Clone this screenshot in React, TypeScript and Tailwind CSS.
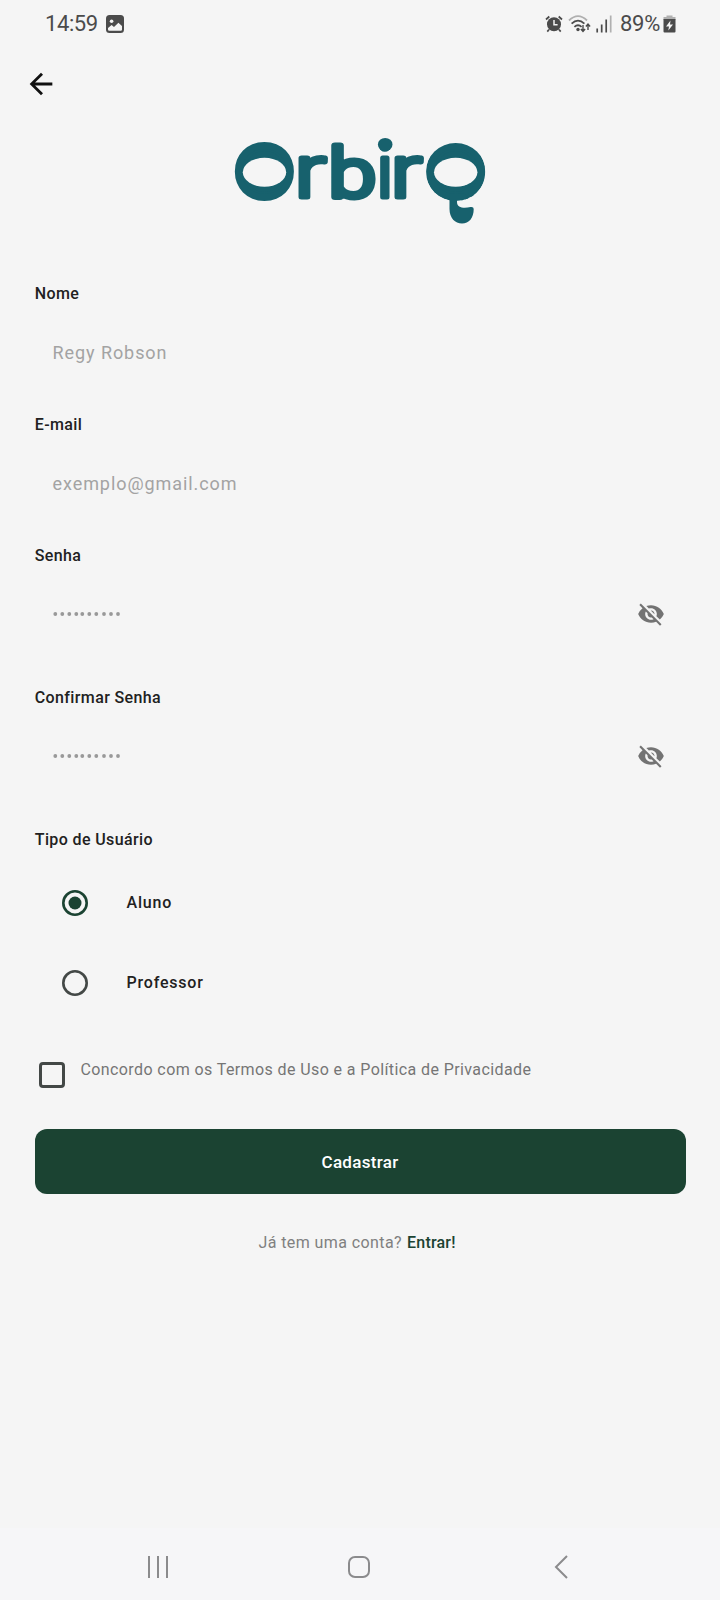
import { MdArrowBack, MdVisibilityOff } from "react-icons/md";

function StatusBar() {
  return (
    <header className="flex h-12 items-center pl-[45px] pr-[44px] text-[#4b4b4b]">
      <span className="text-[22px] leading-6 tracking-[-0.4px]">14:59</span>
      <svg className="ml-[8px] h-[18px] w-[18px]" viewBox="0 0 18 18">
        <rect width="18" height="18" rx="3.5" fill="currentColor" />
        <circle cx="5.6" cy="6.2" r="1.8" fill="#f4f4f4" />
        <path d="M2 14.6V13l3.6-3 2.4 2 4.4-4.2L16 11v3.6q0 1.2-1.2 1.2H3.2Q2 15.800 2 14.600z" fill="#f4f4f4" />
      </svg>
      <div className="ml-auto flex items-center">
        <svg className="h-[18px] w-[18px]" viewBox="0 0 18 18">
          <circle cx="9" cy="9.300" r="7" fill="currentColor" />
          <path d="M1 4.500 4.300 1.500M17 4.500 13.700 1.500M4 14.500 2.300 16.600M14 14.500l1.700 2.100" stroke="currentColor" strokeWidth="1.700" fill="none" />
          <path d="M9 5v4.700h3.600" stroke="#f4f4f4" strokeWidth="1.500" fill="none" />
        </svg>
        <svg className="ml-[5px] h-[20px] w-[24px]" viewBox="0 0 24 20">
          <path d="M1 6.500Q10-2.200 19 6.500" stroke="#b0b0b0" strokeWidth="1.800" fill="none" />
          <path d="M3.600 9.600Q10 3.600 16.400 9.600M6.400 12.800Q10 9.600 13.600 12.800" stroke="currentColor" strokeWidth="1.800" fill="none" />
          <circle cx="10" cy="15.500" r="1.700" fill="currentColor" />
          <path d="M15 11v6M12.900 15l2.100 2.500 2.100-2.500M20 16v-6M17.900 12.500l2.100-2.500 2.100 2.500" stroke="currentColor" strokeWidth="1.400" fill="none" />
        </svg>
        <svg className="ml-[4px] h-[18px] w-[16px]" viewBox="0 0 16 18">
          <path d="M1.200 17.500v-4M5.700 17.500v-8M10.200 17.500v-13" stroke="currentColor" strokeWidth="1.700" />
          <path d="M14.700 17.500v-17" stroke="#b0b0b0" strokeWidth="1.700" />
        </svg>
        <span className="ml-[8px] text-[22px] leading-6 tracking-[-0.3px]">89%</span>
        <svg className="ml-[3px] h-[18px] w-[13px]" viewBox="0 0 13 18">
          <path d="M3.500 2V.500h6V2h3v3h-12V2z" fill="#b0b0b0" />
          <path d="M.500 4h12v12.500q0 1-1 1h-10q-1 0-1-1z" fill="currentColor" />
          <path d="M7.500 5.500 3 11.500h3L5.300 15.500l4.700-6H7z" fill="#f4f4f4" />
        </svg>
      </div>
    </header>
  );
}

function Logo() {
  return (
    <svg className="h-[90px] w-[260px] overflow-visible" viewBox="0 0 260 90" fill="#17616d" stroke="#17616d" strokeLinejoin="round" role="img" aria-label="OrbirQ">
      <defs>
        <clipPath id="bowl">
          <ellipse cx="225.700" cy="38" rx="30" ry="29" />
        </clipPath>
      </defs>
      <text x="34.500" y="63" textAnchor="middle" fontFamily="Lato, sans-serif" fontWeight="900" fontSize="70" strokeWidth="7">O</text>
      <ellipse cx="34.500" cy="38.300" rx="21.700" ry="14.500" fill="#f5f5f5" stroke="none" />
      <g fontFamily="Roboto, sans-serif" fontWeight="300" fontSize="74" strokeWidth="5">
        <text transform="translate(64.500 62.500) scale(1.270 1)">r</text>
        <text transform="translate(98.500 62.500) scale(1.250 1)" fontSize="69" strokeWidth="6">b</text>
        <text transform="translate(146.500 62.500)">i</text>
        <text transform="translate(160.500 62.500) scale(1.270 1)">r</text>
      </g>
      <ellipse cx="155.200" cy="10.500" rx="7.300" ry="6.600" stroke="none" />
      <g clipPath="url(#bowl)">
        <text x="225.700" y="63" textAnchor="middle" fontFamily="Lato, sans-serif" fontWeight="900" fontSize="70" strokeWidth="7">Q</text>
      </g>
      <ellipse cx="225.700" cy="38.300" rx="21.700" ry="14.500" fill="#f5f5f5" stroke="none" />
      <path d="M219.500 63V75C219.500 84 225 89.500 232 89.500C239 89.500 243.700 84 243.700 75Q243.700 72.500 240.500 73C234 74.500 227 74 227 68V63z" stroke="none" />
    </svg>
  );
}

function Label({ children }: { children: string }) {
  return <label className="block h-6 pl-[0.3px] text-[16px] font-medium leading-6 tracking-[0.37px] text-[#212121]">{children}</label>;
}

function Field({ label, value }: { label: string; value: string }) {
  return (
    <div className="mb-[29px]">
      <Label>{label}</Label>
      <div className="mt-[15px] mb-px flex h-[62px] items-center pl-[18px] text-[18px] tracking-[0.93px] text-[#a3a3a3]">{value}</div>
    </div>
  );
}

const dots = [2.3, 9.3, 16.3, 23.3, 29.3, 36.3, 43.3, 51, 58, 65];

function PasswordField({ label }: { label: string }) {
  return (
    <div className="mb-[40px]">
      <Label>{label}</Label>
      <div className="mt-[15px] mb-px flex h-[62px] items-center justify-between pl-[18px] pr-[21px]">
        <svg className="mt-[2px] h-[6px] w-[68px]" viewBox="0 0 68 6" fill="#999999">
          {dots.map((x) => (
            <circle key={x} cx={x} cy="2" r="1.900" />
          ))}
        </svg>
        <MdVisibilityOff className="h-[28px] w-[28px] text-[#737373]" />
      </div>
    </div>
  );
}

function Radio({ label, checked }: { label: string; checked?: boolean }) {
  return (
    <div className="flex h-20 items-center pl-[27px]">
      <svg className={checked ? "h-[26px] w-[26px] text-[#1b4332]" : "h-[26px] w-[26px] text-[#434846]"} viewBox="0 0 26 26">
        <circle cx="13" cy="13" r="11.700" fill="none" stroke="currentColor" strokeWidth="2.600" />
        {checked && <circle cx="13" cy="13" r="6.500" fill="currentColor" />}
      </svg>
      <span className="ml-[39px] text-[16px] font-medium leading-6 tracking-[0.8px] text-[#212121]">{label}</span>
    </div>
  );
}

function NavBar() {
  return (
    <nav className="mt-auto flex h-[72px] items-center bg-[#f6f6f8] pl-[147px] pt-[6px]">
      <svg className="h-6 w-6" viewBox="0 0 24 24" stroke="#8b8b8d" strokeWidth="2">
        <path d="M2 1v22M11 1v22M20 1v22" />
      </svg>
      <svg className="ml-[176px] h-6 w-6" viewBox="0 0 24 24" stroke="#8b8b8d" strokeWidth="2" fill="none">
        <rect x="2" y="2" width="20" height="20" rx="6" />
      </svg>
      <svg className="ml-[183px] h-6 w-[14px]" viewBox="0 0 14 24" stroke="#8b8b8d" strokeWidth="2" fill="none">
        <path d="M13 1 2 12l11 11" />
      </svg>
    </nav>
  );
}

export default function App() {
  return (
    <div className="flex h-[1600px] w-[720px] flex-col overflow-hidden bg-[#f5f5f5] font-['Roboto',sans-serif]">
      <StatusBar />
      <div className="flex h-[71px] items-center pl-[23.500px]">
        <MdArrowBack className="h-[34px] w-[34px] text-[#111111]" />
      </div>
      <div className="mt-[15px] flex h-[90px] justify-center">
        <Logo />
      </div>
      <main className="mt-[58px] flex flex-col px-[34.500px]">
        <Field label="Nome" value="Regy Robson" />
        <Field label="E-mail" value="exemplo@gmail.com" />
        <PasswordField label="Senha" />
        <PasswordField label="Confirmar Senha" />
        <Label>Tipo de Usuário</Label>
        <div className="mt-[11px]">
          <Radio label="Aluno" checked />
          <Radio label="Professor" />
        </div>
        <div className="mt-[35px] flex items-start pl-[4px]">
          <span className="mt-[4px] h-[26px] w-[26px] rounded-[4px] border-3 border-[#434846]" />
          <span className="ml-[16px] text-[16px] leading-6 tracking-[0.4px] text-[#757575]">
            Concordo com os Termos de Uso e a Política de Privacidade
          </span>
        </div>
        <button className="mt-[41px] flex h-[65px] items-center justify-center rounded-[12px] bg-[#1b4332] pt-[3px] text-[17px] font-medium tracking-[0.3px] text-white">
          Cadastrar
        </button>
        <p className="mt-[37px] flex pl-[224px] text-[16px] leading-6 tracking-[0.41px] text-[#808080]">
          Já tem uma conta?
          <span className="ml-[5px] font-medium tracking-[0.2px] text-[#1b4332]">Entrar!</span>
        </p>
      </main>
      <NavBar />
    </div>
  );
}
